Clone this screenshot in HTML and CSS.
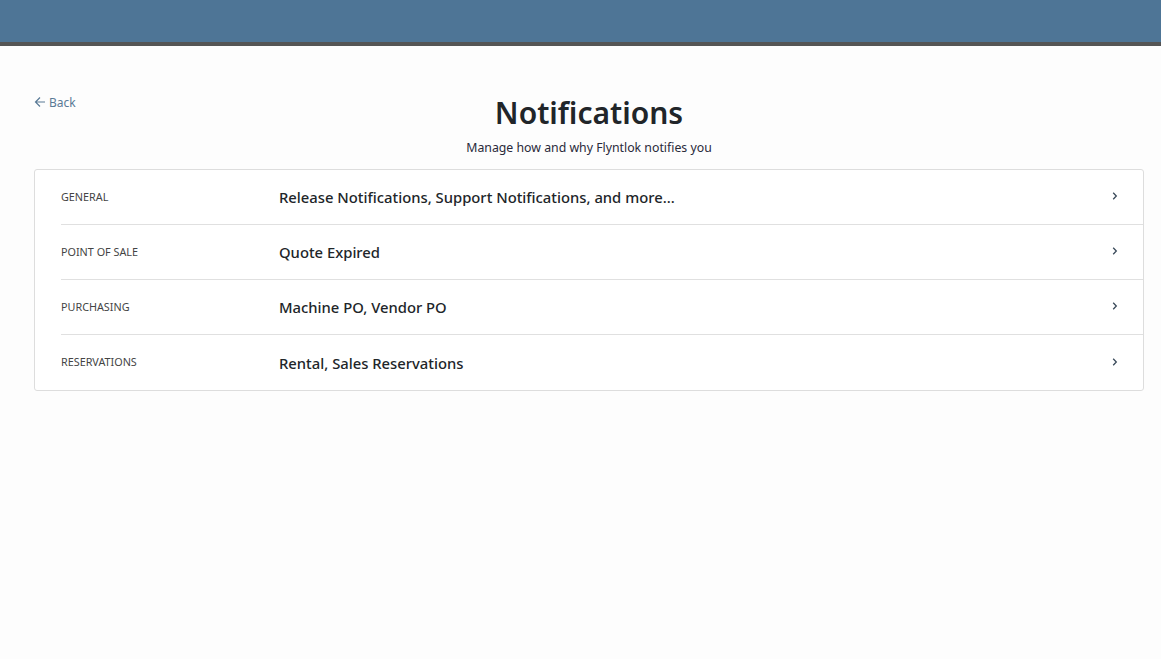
FILE: index.html
```html
<!DOCTYPE html>
<html lang="en">
<head>
  <meta charset="UTF-8" />
  <title>Notifications</title>
  <link rel="stylesheet" href="styles.css">
</head>
<body>
  <header class="topbar"></header>

  <main class="page">
    <a class="back-link" href="#">
      <svg width="12" height="12" viewBox="0 0 12 12"><path d="M11 6H1.5M6 1.5L1.5 6 6 10.5" fill="none" stroke="currentColor" stroke-width="1.2"/></svg>
      Back
    </a>

    <div class="page-head">
      <h1>Notifications</h1>
      <p>Manage how and why Flyntlok notifies you</p>
    </div>

    <!-- notification groups -->
    <div class="card">
      <a class="row" href="#">
        <span class="label">General</span>
        <span class="value">Release Notifications, Support Notifications, and more...</span>
        <svg class="chev" width="8" height="10" viewBox="0 0 8 10"><path d="M2.2 1.8L5.3 5 2.2 8.2" fill="none" stroke="currentColor" stroke-width="1.3"/></svg>
      </a>
      <a class="row" href="#">
        <span class="label">Point of Sale</span>
        <span class="value">Quote Expired</span>
        <svg class="chev" width="8" height="10" viewBox="0 0 8 10"><path d="M2.2 1.8L5.3 5 2.2 8.2" fill="none" stroke="currentColor" stroke-width="1.3"/></svg>
      </a>
      <a class="row" href="#">
        <span class="label">Purchasing</span>
        <span class="value">Machine PO, Vendor PO</span>
        <svg class="chev" width="8" height="10" viewBox="0 0 8 10"><path d="M2.2 1.8L5.3 5 2.2 8.2" fill="none" stroke="currentColor" stroke-width="1.3"/></svg>
      </a>
      <a class="row" href="#">
        <span class="label">Reservations</span>
        <span class="value">Rental, Sales Reservations</span>
        <svg class="chev" width="8" height="10" viewBox="0 0 8 10"><path d="M2.2 1.8L5.3 5 2.2 8.2" fill="none" stroke="currentColor" stroke-width="1.3"/></svg>
      </a>
    </div>
  </main>
</body>
</html>
```

FILE: styles.css
```css
body {
  margin: 0;
  background: #fdfdfd;
  color: #212529;
  font-family: 'Noto Sans', 'Open Sans', sans-serif;
}

.topbar {
  height: 42px;
  background: #4e7596;
  border-bottom: 4px solid #555555;
}

.page {
  padding: 48px 17px 0 34px;
}

.back-link {
  display: flex;
  align-items: center;
  gap: 3px;
  width: max-content;
  color: #5a7a96;
  font-size: 12px;
  text-decoration: none;
  height: 16px;
}

.page-head {
  text-align: center;
  margin-top: -23px;
  margin-bottom: 12px;
}

.page-head h1 {
  margin: 0;
  font-size: 30px;
  font-weight: 600;
  line-height: 52px;
  color: #212529;
}

.page-head p {
  margin: 0;
  font-size: 12.3px;
  line-height: 18px;
  color: #2a2a3a;
}

.card {
  border: 1px solid #dddddd;
  border-radius: 3px;
  background: #ffffff;
}

.row {
  display: flex;
  align-items: center;
  height: 54px;
  margin-left: 26px;
  padding-right: 24px;
  border-bottom: 1px solid #e0e0e0;
  color: inherit;
  text-decoration: none;
}

.row:last-child {
  height: 55px;
  border-bottom: none;
}

.label {
  width: 218px;
  font-size: 10.8px;
  text-transform: uppercase;
  color: #444444;
  margin-top: -2px;
}

.value {
  flex: 1;
  font-size: 14.8px;
  font-weight: 500;
  color: #212529;
}

.chev {
  color: #3a4a5a;
  margin-top: -2px;
}
```
